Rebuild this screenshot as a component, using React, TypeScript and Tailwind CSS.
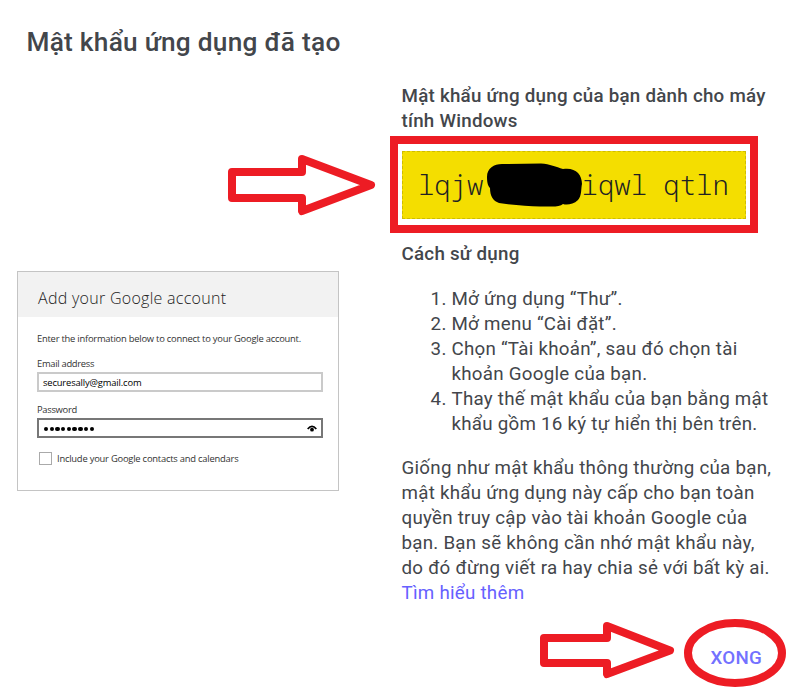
import React from "react";

const steps = [
  ["Mở ứng dụng “Thư”."],
  ["Mở menu “Cài đặt”."],
  ["Chọn “Tài khoản”, sau đó chọn tài", "khoản Google của bạn."],
  ["Thay thế mật khẩu của bạn bằng mật", "khẩu gồm 16 ký tự hiển thị bên trên."],
];

const paragraph = [
  "Giống như mật khẩu thông thường của bạn,",
  "mật khẩu ứng dụng này cấp cho bạn toàn",
  "quyền truy cập vào tài khoản Google của",
  "bạn. Bạn sẽ không cần nhớ mật khẩu này,",
  "do đó đừng viết ra hay chia sẻ với bất kỳ ai.",
];

function AccountCard() {
  return (
    <section className="mt-[187px] flex h-[220px] w-[322px] flex-col border border-[#c4c4c4] bg-white font-['Open_Sans','Noto_Sans',sans-serif] text-[#333]">
      <header className="flex h-[45px] items-center bg-[#f2f2f2] pt-[7px] pl-5">
        <h2 className="text-[16px] font-light tracking-[0.28px] whitespace-nowrap text-[#222]">Add your Google account</h2>
      </header>
      <div className="flex flex-col pr-[15px] pl-[19px] text-[9.4px] leading-3 whitespace-nowrap">
        <p className="mt-[16px] tracking-[-0.23px]">Enter the information below to connect to your Google account.</p>
        <label className="mt-[13px] tracking-[-0.3px]">Email address</label>
        <div className="mt-[2px] flex h-5 items-center border-2 border-[#cacaca] pt-[2px] pl-[4px] tracking-[-0.15px] text-black">securesally@gmail.com</div>
        <label className="mt-3 tracking-[-0.3px]">Password</label>
        <div className="mt-[2px] flex h-5 items-center justify-between border-2 border-[#777] pr-1 pl-[5px]">
          <div className="flex gap-[1.3px] pt-[2px]">
            {Array.from({ length: 9 }, (_, i) => <i key={i} className="size-[4.4px] rounded-full bg-black" />)}
          </div>
          <svg width="10" height="8" viewBox="0 0 10 8" fill="none">
            <path d="M.7 5Q5-.4 9.3 5" stroke="#000" strokeWidth="1.7" />
            <circle cx="5" cy="5.700" r="1.9" fill="#000" />
          </svg>
        </div>
        <div className="mt-[14px] flex items-center gap-[5px] pl-[2px] tracking-[-0.22px]">
          <i className="size-[13px] border border-[#aaa]" />
          <span className="pt-px">Include your Google contacts and calendars</span>
        </div>
      </div>
    </section>
  );
}

export default function App() {
  return (
    <main className="relative h-[696px] w-[801px] overflow-hidden bg-white font-[Roboto,sans-serif] text-[18.75px] leading-[25px] tracking-[0.25px] text-[#43464b]">
      <h1 className="h-[84px] pt-[26px] pl-[26.5px] text-[26.25px] leading-8 font-medium tracking-[0.25px]">Mật khẩu ứng dụng đã tạo</h1>
      <div className="flex gap-[63px] pl-[17px]">
        <AccountCard />
        <section className="flex w-[384px] flex-col whitespace-nowrap">
          <h2 className="-ml-[0.5px] font-medium">Mật khẩu ứng dụng của bạn dành cho máy<br />tính Windows</h2>
          <div className="mt-[2px] -ml-3 flex h-[97px] w-[368px] flex-col border-8 border-[#ed1c24] px-1 pt-[7px]">
            <div className="flex h-[68px] items-center border border-dashed border-[#cfbd00] bg-[#f4de00] pb-[2px] pl-[15px] font-['Noto_Sans_Mono','DejaVu_Sans_Mono',monospace] text-[27.3px] font-[350] tracking-[-0.02px] text-[#202124]">
              lqjw&nbsp;&nbsp;&nbsp;&nbsp;&nbsp;&nbsp;iqwl qtln
            </div>
          </div>
          <h3 className="mt-[9px] -ml-[0.5px] font-medium">Cách sử dụng</h3>
          <ol className="mt-5 list-decimal pl-[49.5px]">
            {steps.map((lines) => (
              <li key={lines[0]}>{lines.map((line) => <span key={line} className="block first:inline-block first:align-top">{line}</span>)}</li>
            ))}
          </ol>
          <p className="mt-[19px] -ml-[0.5px]">{paragraph.map((line) => <span key={line} className="block">{line}</span>)}</p>
          <a className="-ml-[0.5px] text-[#6661ff]">Tìm hiểu thêm</a>
          <button className="mt-10 mr-[24px] self-end font-medium text-[#7371ff]">XONG</button>
        </section>
      </div>
      <svg className="pointer-events-none absolute inset-0" width="801" height="696" viewBox="0 0 801 696" fill="none" stroke="#ed1c24" strokeWidth="8" strokeLinejoin="round">
        <path d="M232 172H302V159L371 185 302 211V198H232Z" />
        <path d="M544 638H607V626L670 650.5 607 674V663H544Z" />
        <ellipse cx="735" cy="653" rx="47" ry="30" />
        <path fill="#000" stroke="none" d="M487 177C487 168 494 164 502 164L541 163.500C550 164 556 167 563 169C575 167 582 174 582 184C581 187 582 196 578 200C573 205 566 205 563 204C559 208 548 206 540 206.500C528 206 512 205 499 203C493 201 490 196 490 188C488 186 487 183 487 177Z" />
      </svg>
    </main>
  );
}
